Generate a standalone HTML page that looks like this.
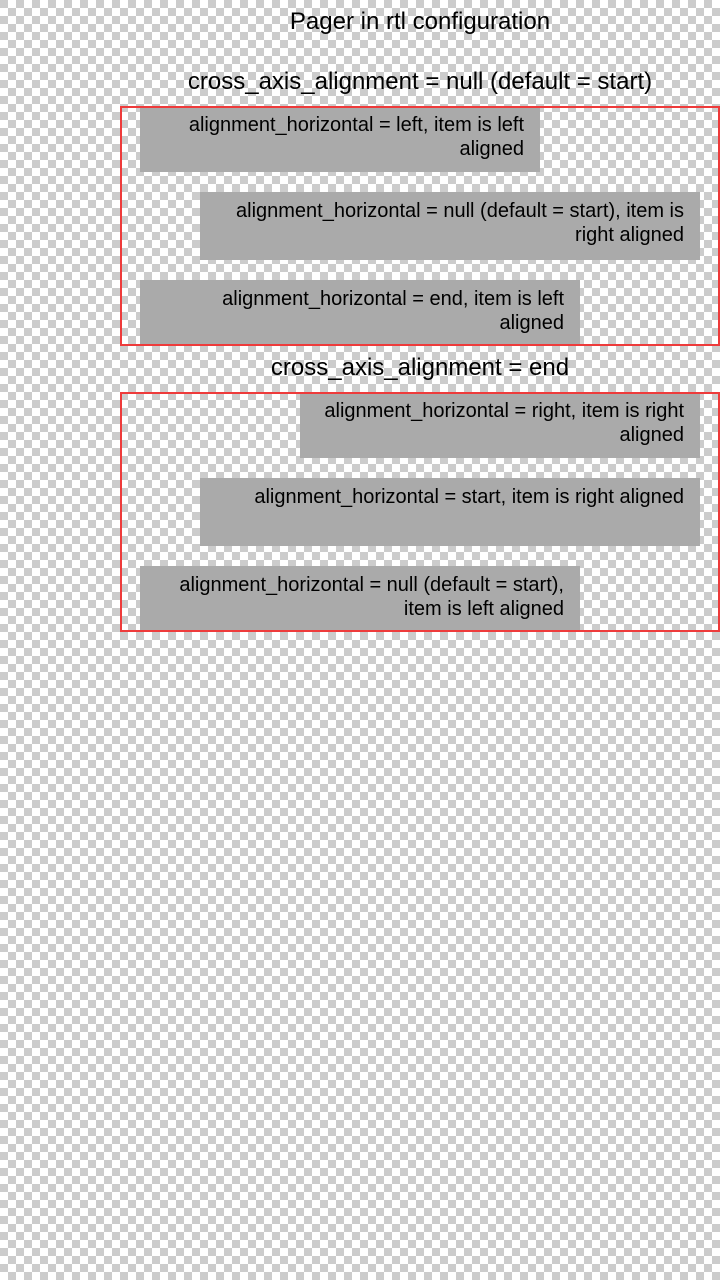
<!DOCTYPE html>
<html><head><meta charset="utf-8"><style>
html,body{margin:0;padding:0;}
body{width:720px;height:1280px;position:relative;overflow:hidden;
background-color:#fff;
background-image:conic-gradient(#fff 25%,#cccccc 0 50%,#fff 0 75%,#cccccc 0);
background-size:16px 16px;
font-family:"Liberation Sans","DejaVu Sans",sans-serif;color:#000;}
.t{position:absolute;left:120px;width:600px;text-align:center;font-size:24px;line-height:28px;white-space:nowrap;}
.box{position:absolute;left:120px;width:596px;border:2px solid #ee3b3b;}
.it{position:absolute;background:#aaaaaa;font-size:20px;line-height:24px;text-align:right;padding:12px 16px 0 0;box-sizing:border-box;white-space:nowrap;}
</style></head><body>
<div class="t" style="top:8px">Pager in rtl configuration</div>
<div class="t" style="top:68px">cross_axis_alignment = null (default = start)</div>
<div class="box" style="top:106px;height:236px"></div>
<div class="it" style="left:140px;top:108px;width:400px;height:64px;padding-top:5px">alignment_horizontal = left, item is left<br>aligned</div>
<div class="it" style="left:200px;top:192px;width:500px;height:68px;padding-top:7px">alignment_horizontal = null (default = start), item is<br>right aligned</div>
<div class="it" style="left:140px;top:280px;width:440px;height:64px;padding-top:7px">alignment_horizontal = end, item is left<br>aligned</div>
<div class="t" style="top:354px">cross_axis_alignment = end</div>
<div class="box" style="top:392px;height:236px"></div>
<div class="it" style="left:300px;top:394px;width:400px;height:64px;padding-top:5px">alignment_horizontal = right, item is right<br>aligned</div>
<div class="it" style="left:200px;top:478px;width:500px;height:68px;padding-top:7px">alignment_horizontal = start, item is right aligned</div>
<div class="it" style="left:140px;top:566px;width:440px;height:64px;padding-top:7px">alignment_horizontal = null (default = start),<br>item is left aligned</div>
</body></html>
